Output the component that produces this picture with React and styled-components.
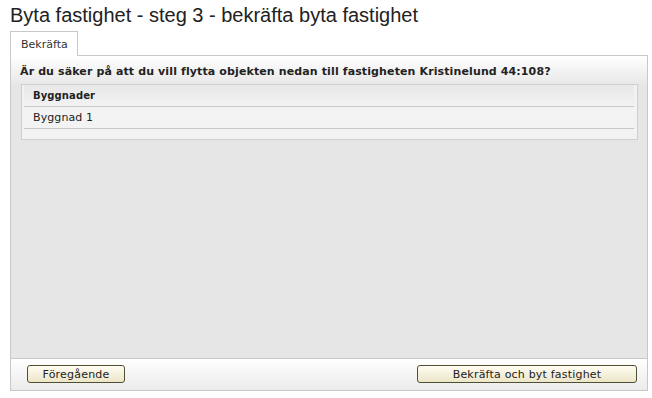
import React from "react";
import styled, { createGlobalStyle } from "styled-components";

const Global = createGlobalStyle`
  html, body { margin: 0; padding: 0; background: #fff; }
  * { box-sizing: border-box; }
`;

const Page = styled.div`
  padding: 0 4px 0 10px;
  font-family: "DejaVu Sans", Verdana, sans-serif;
  color: #333;
`;

const Title = styled.h1`
  margin: 0;
  padding-top: 3px;
  height: 31px;
  font-family: "Liberation Sans", Arial, sans-serif;
  font-weight: normal;
  font-size: 20px;
  line-height: 24px;
  color: #222;
`;

const Tabs = styled.div`
  display: flex;
  position: relative;
  z-index: 1;
  margin-bottom: -1px;
`;

const Tab = styled.div`
  height: 25px;
  padding: 0 9px 0 10px;
  border: 1px solid #c8c8c8;
  border-bottom: none;
  background: #fff;
  font-size: 11px;
  line-height: 25px;
  color: #333;
`;

const Panel = styled.div`
  width: 638px;
  height: 336px;
  border: 1px solid #c8c8c8;
  background: #e6e6e6;
  display: flex;
  flex-direction: column;
`;

const Question = styled.div`
  height: 28px;
  padding: 0 9px;
  background: linear-gradient(#ffffff, #e8e8e8);
  font-size: 11px;
  font-weight: bold;
  letter-spacing: 0.12px;
  line-height: 31px;
  color: #222;
  white-space: nowrap;
`;

const Body = styled.div`
  flex: 1;
  padding: 0 9px 0 10px;
`;

const Box = styled.div`
  border: 1px solid #d0d0d0;
  background: #f2f2f2;
  padding: 0 3px 10px 2px;
`;

const Row = styled.div`
  height: 22px;
  padding-left: 9px;
  border-bottom: 1px solid #c8c8c8;
  font-size: ${(p) => (p.$head ? "10px" : "11px")};
  font-weight: ${(p) => (p.$head ? "bold" : "normal")};
  letter-spacing: 0.1px;
  line-height: 22px;
  color: #222;
  background: ${(p) => (p.$head ? "linear-gradient(#e8e8e8, #f2f2f2)" : "#f3f3f3")};
`;

const Footer = styled.div`
  height: 32px;
  border-top: 1px solid #c8c8c8;
  background: linear-gradient(#ffffff, #ebebeb);
  display: flex;
  align-items: flex-start;
  justify-content: space-between;
  padding: 6px 10px 0 16px;
`;

const Button = styled.button`
  width: ${(p) => p.$w}px;
  height: 18px;
  padding: 0;
  border: 1px solid #4f4f33;
  border-radius: 3px;
  background: linear-gradient(#fffdf2, #ece5c8);
  font-family: "DejaVu Sans", Verdana, sans-serif;
  font-size: 11px;
  letter-spacing: 0.2px;
  line-height: 15px;
  color: #222;
  cursor: pointer;
`;

export default function App() {
  return (
    <Page>
      <Global />
      <Title>Byta fastighet - steg 3 - bekräfta byta fastighet</Title>
      <Tabs>
        <Tab>Bekräfta</Tab>
      </Tabs>
      <Panel>
        <Question>
          Är du säker på att du vill flytta objekten nedan till fastigheten Kristinelund 44:108?
        </Question>
        <Body>
          <Box>
            <Row $head>Byggnader</Row>
            <Row>Byggnad 1</Row>
          </Box>
        </Body>
        <Footer>
          <Button $w={98}>Föregående</Button>
          <Button $w={220}>Bekräfta och byt fastighet</Button>
        </Footer>
      </Panel>
    </Page>
  );
}
